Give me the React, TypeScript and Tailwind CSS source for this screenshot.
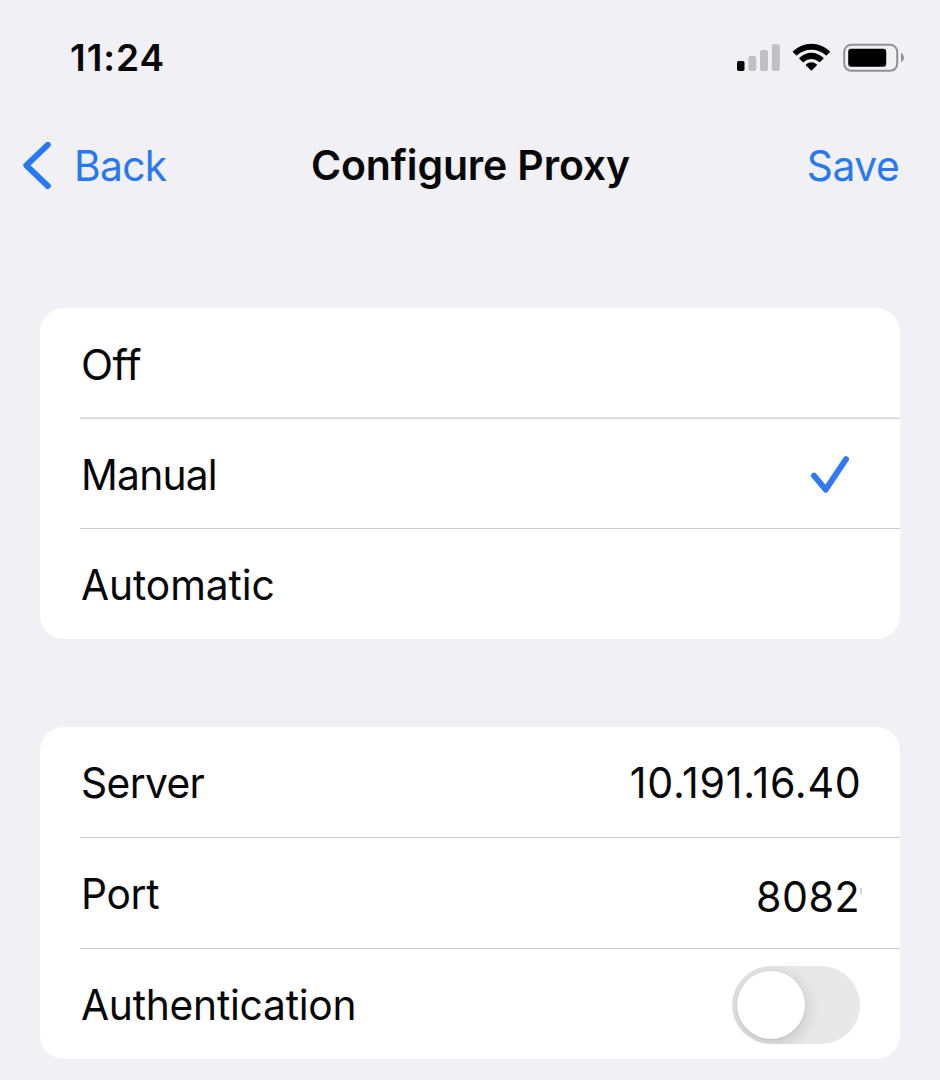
import React from "react";

function StatusIcons() {
  return (
    <svg className="h-[30px] w-[168px]" viewBox="736 43 168 30" fill="none">
      <rect x="737" y="61" width="7.5" height="10" rx="1.8" fill="#000" />
      <rect x="748.5" y="56" width="7.8" height="15" rx="2" fill="#c0c0c4" />
      <rect x="760" y="50" width="8" height="21" rx="2" fill="#c0c0c4" />
      <rect x="771.8" y="44.2" width="8" height="26.8" rx="2" fill="#c0c0c4" />
      <path d="M793 51.2A26.5 26.5 0 0 1 829.8 51.2Q830.3 51.7 829.8 52.2L826.7 55.3Q826.2 55.7 825.7 55.3A21.2 21.2 0 0 0 797.1 55.3Q796.6 55.7 796.1 55.3L793 52.2Q792.5 51.7 793 51.2Z" fill="#000" />
      <path d="M799.4 57.8A17 17 0 0 1 823.4 57.8Q823.9 58.3 823.4 58.8L820.1 62.1Q819.6 62.5 819.1 62.1A11.4 11.4 0 0 0 803.7 62.1Q803.2 62.5 802.7 62.1L799.4 58.8Q798.9 58.3 799.4 57.8Z" fill="#000" />
      <path d="M806.1 64.3A8 8 0 0 1 816.7 64.3Q817.3 64.9 816.7 65.5L812 70.3Q811.4 70.9 810.8 70.3L806.1 65.5Q805.5 64.9 806.1 64.3Z" fill="#000" />
      <rect x="844.2" y="44.8" width="53" height="26" rx="7" stroke="#919195" strokeWidth="2" />
      <rect x="848.2" y="48.8" width="38" height="18" rx="3" fill="#000" />
      <path d="M901 53c1.8 1 2.9 2.6 2.9 4.6s-1.1 3.6-2.9 4.6z" fill="#8f8f94" />
    </svg>
  );
}

function Check() {
  return (
    <svg className="mr-[50px] h-[40px] w-[40px]" viewBox="810 455 40 40" fill="none">
      <path d="M814 475.7L825.7 489.7L846 459.2" stroke="#3079f7" strokeWidth="6" strokeLinecap="round" strokeLinejoin="round" />
    </svg>
  );
}

function Toggle() {
  return (
    <button role="switch" aria-checked="false" className="mt-px flex h-[78px] w-[128px] items-center overflow-hidden rounded-full bg-[#e8e8e8] pl-[5px]">
      <span className="h-[68px] w-[68px] rounded-full bg-white shadow-[0_4px_18px_rgba(0,0,0,0.18),0_1px_2px_rgba(0,0,0,0.08)]" />
    </button>
  );
}

const text = "inline-block text-[42px] leading-none whitespace-nowrap";
const label = `${text} origin-left scale-x-[0.97]`;
const value = `${text} origin-right scale-x-[0.98]`;

export default function App() {
  return (
    <main className="h-[1080px] w-[940px] overflow-hidden bg-[#f1f0f5] font-['Inter',sans-serif] text-[#080808]">
      <header className="flex h-[116px] items-center justify-between pr-9 pl-[70px]">
        <span className="text-[37px] font-semibold tracking-[1px]">11:24</span>
        <StatusIcons />
      </header>
      <nav className="grid h-[100px] grid-cols-[1fr_auto_1fr] items-center pr-[40px] pl-[22px] text-[#2878f6]">
        <button className="flex items-center gap-[22px]">
          <svg className="h-12 w-[30px]" viewBox="22 142 30 48" fill="none">
            <path d="M47.8 144.8L26.3 165.3L47.8 186" stroke="currentColor" strokeWidth="6" strokeLinecap="round" strokeLinejoin="round" />
          </svg>
          <span className={`${label} tracking-[-0.67px]`}>Back</span>
        </button>
        <h1 className="ml-[19px] text-[41px] font-semibold tracking-[-0.15px] whitespace-nowrap text-[#080808]">Configure Proxy</h1>
        <div className="flex justify-end pr-px">
          <button className={`${text} origin-right scale-x-[0.97] tracking-[-0.5px]`}>Save</button>
        </div>
      </nav>
      <section className="mx-10 mt-[92px] h-[331px] rounded-[24px] bg-white pl-10">
        <div className="flex h-[111px] items-center border-b border-[#d8d8da] pt-[3px] pl-px shadow-[inset_0_-1px_0_#e6e6e6]">
          <span className={`${text} tracking-[-0.5px]`}>Off</span>
        </div>
        <div className="flex h-[110px] items-center justify-between border-b border-[#cbcbcd] pt-[2px] pl-px">
          <span className={`${label} tracking-[-0.8px]`}>Manual</span>
          <Check />
        </div>
        <div className="flex h-[110px] items-center pt-[2px] pl-px">
          <span className={`${label} tracking-[-0.11px]`}>Automatic</span>
        </div>
      </section>
      <section className="mx-10 mt-[88px] h-[332px] rounded-[24px] bg-white pl-10">
        <div className="flex h-[111px] items-center justify-between border-b border-[#cbcbcd] pt-[2px] pr-[38px] pl-px">
          <span className={`${label} tracking-[-0.64px]`}>Server</span>
          <span className={`${value} tracking-[0.79px]`}>10.191.16.40</span>
        </div>
        <div className="flex h-[111px] items-center justify-between border-b border-[#cbcbcd] pt-[2px] pr-[38px] pl-px">
          <span className={`${label} tracking-[-0.33px]`}>Port</span>
          <span className="flex items-center pt-[6px]">
            <span className={`${value} tracking-[0.5px]`}>8082</span>
            <span className="mb-[12px] h-[6px] w-[2px] bg-[#d4d4d4]" />
          </span>
        </div>
        <div className="flex h-[110px] items-center justify-between pr-10 pl-px">
          <span className={`${label} pt-[2px] tracking-[-0.26px]`}>Authentication</span>
          <Toggle />
        </div>
      </section>
    </main>
  );
}
